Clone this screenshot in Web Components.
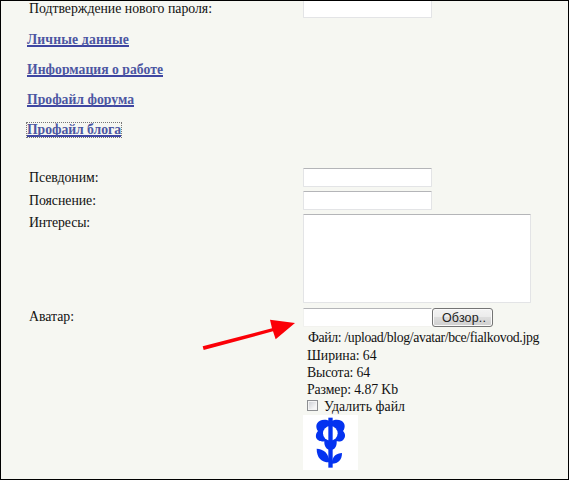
<!DOCTYPE html>
<html lang="ru">
<head>
<meta charset="utf-8">
<title>Профайл</title>
<style>
html, body { margin: 0; height: 100%; }
body { overflow: hidden; }
</style>
</head>
<body>
<profile-page></profile-page>
<script>
function define(name, html, setup) {
  const template = document.createElement('template');
  template.innerHTML = html;
  customElements.define(name, class extends HTMLElement {
    constructor() {
      super();
      this.attachShadow({ mode: 'open' }).append(template.content.cloneNode(true));
    }
    connectedCallback() { if (setup) setup(this); }
  });
}

/* One line of text, tracked so that it fills the length given in "w". */
define('text-line', `<style>
:host { display: block; white-space: pre; }
span { display: inline-block; }
</style><span><slot></slot></span>`, el => {
  const span = el.shadowRoot.querySelector('span');
  const want = parseFloat(el.getAttribute('w'));
  const n = el.textContent.length;
  if (want && n) span.style.letterSpacing = ((want - span.getBoundingClientRect().width) / n) + 'px';
});

define('section-link', `<style>
:host { display: block; height: 30px; font-size: 13.7px; font-weight: bold; color: #4c56a2; line-height: 16px; }
a { display: inline-block; box-sizing: border-box; height: 14px; line-height: 13px; border-bottom: 2px solid #3f46a2; color: inherit; }
:host([focused]) a { outline: 1px dotted #777; outline-offset: 0; }
</style><a><slot></slot></a>`);

define('text-field', `<style>
:host { display: block; box-sizing: border-box; width: 129px; height: 19px; background: #fff;
  border: 1px solid #e3e4e6; border-top-color: #b4b5b8; border-radius: 1px; }
:host([area]) { width: 228px; height: 89px; }
:host([plain]) { border-left-color: #f0f1ee; border-right-color: #fff; border-bottom-color: #f2f2ee; }
</style>`);

define('push-button', `<style>
:host { display: block; box-sizing: border-box; width: 61px; height: 19px; border: 1px solid #747474; border-radius: 3px;
  background: linear-gradient(#f3f3f3, #ebebeb 50%, #dddddd 50%, #cfcfcf); box-shadow: inset 0 0 0 1px #fafafa;
  font: 12.5px/19px "Liberation Sans", Arial, sans-serif; color: #222; padding-left: 9px; }
</style><slot></slot>`);

define('check-box', `<style>
:host { display: block; box-sizing: border-box; width: 11px; height: 11px; border: 1px solid #8d8f92;
  background: linear-gradient(135deg, #c9ccd2, #f6f6f6 75%); box-shadow: inset 0 0 0 1px #f4f4f4; }
</style>`);

define('form-row', `<style>
:host { display: grid; grid-template-columns: 274px auto; }
.label { padding-top: 2px; }
</style><div class="label"><slot name="label"></slot></div><div><slot></slot></div>`);

define('flower-avatar', `<style>
:host { display: block; width: 55px; height: 55px; background: #fff; }
svg { display: block; }
</style><svg width="55" height="55" viewBox="39 60 165 165">
<path fill="#0433f0" d="M122 80C113 73 98 73 90 77C76 84 77 99 84 108C75 118 76 130 85 136C90 140 97 140 103 139C102 153 109 165 122 165C135 165 141 153 140 139C147 140 154 140 160 134C168 126 166 115 159 108C166 99 167 84 154 77C145 73 131 73 122 80Z"/>
<ellipse cx="121" cy="115" rx="22" ry="22" fill="#fff"/>
<g fill="#0433f0"><path d="M115 68h13v150h-13z"/><path d="M80 161C100 162 116 173 119 202C96 203 80 190 80 161Z"/><path d="M156 174C140 174 126 184 125 206C146 206 156 194 156 174Z"/></g></svg>`);

define('red-arrow', `<style>
:host { display: block; position: absolute; left: 189px; top: 309px; pointer-events: none; }
svg { display: block; }
</style><svg width="115" height="45" viewBox="0 0 345 135"><path d="M38 109L246 55L240 29L315 39L257 88L249 64L41 120Z" fill="#fb0007"/></svg>`);

define('profile-page', `<style>
:host { display: block; position: relative; box-sizing: border-box; width: 569px; height: 480px; overflow: hidden;
  border: 1px solid #000; background: #f6f7f2; padding-left: 28px; color: #111;
  font: 13.8px/16px "Liberation Serif", "Times New Roman", serif; }
.top { height: 31px; }
.top text-field { margin-top: -2px; }
.top text-line { margin-top: -2px; }
nav { height: 136px; margin-left: -2px; }
.r1 { height: 23px; } .r2 { height: 23px; } .r3 { height: 94px; }
.r3 text-line, .r4 > text-line { margin-top: -1px; }
.file { display: flex; gap: 0; }
.info { line-height: 17px; padding: 2px 0 0 4px; }
.first { margin-left: 1px; height: 18px; }
.check { display: flex; gap: 6px; align-items: center; height: 17px; }
.check check-box { margin-top: -2px; }
</style>
<form-row class="top"><text-line slot="label" w="183">Подтверждение нового пароля:</text-line><text-field></text-field></form-row>
<nav>
<section-link><text-line w="102">Личные данные</text-line></section-link>
<section-link><text-line w="136">Информация о работе</text-line></section-link>
<section-link><text-line w="107">Профайл форума</text-line></section-link>
<section-link focused><text-line w="94">Профайл блога</text-line></section-link>
</nav>
<form-row class="r1"><text-line slot="label" w="69.5">Псевдоним:</text-line><text-field></text-field></form-row>
<form-row class="r2"><text-line slot="label" w="67">Пояснение:</text-line><text-field></text-field></form-row>
<form-row class="r3"><text-line slot="label" w="61">Интересы:</text-line><text-field area></text-field></form-row>
<form-row class="r4"><text-line slot="label" w="45">Аватар:</text-line>
<div class="file"><text-field plain></text-field><push-button><text-line w="44">Обзор..</text-line></push-button></div>
<div class="info">
<text-line class="first" w="231">Файл: /upload/blog/avatar/bce/fialkovod.jpg</text-line>
<text-line w="69.5">Ширина: 64</text-line>
<text-line w="63">Высота: 64</text-line>
<text-line w="91">Размер: 4.87 Kb</text-line>
<div class="check"><check-box></check-box><text-line w="81">Удалить файл</text-line></div>
</div>
<flower-avatar></flower-avatar>
</form-row>
<red-arrow></red-arrow>`);
</script>
</body>
</html>
